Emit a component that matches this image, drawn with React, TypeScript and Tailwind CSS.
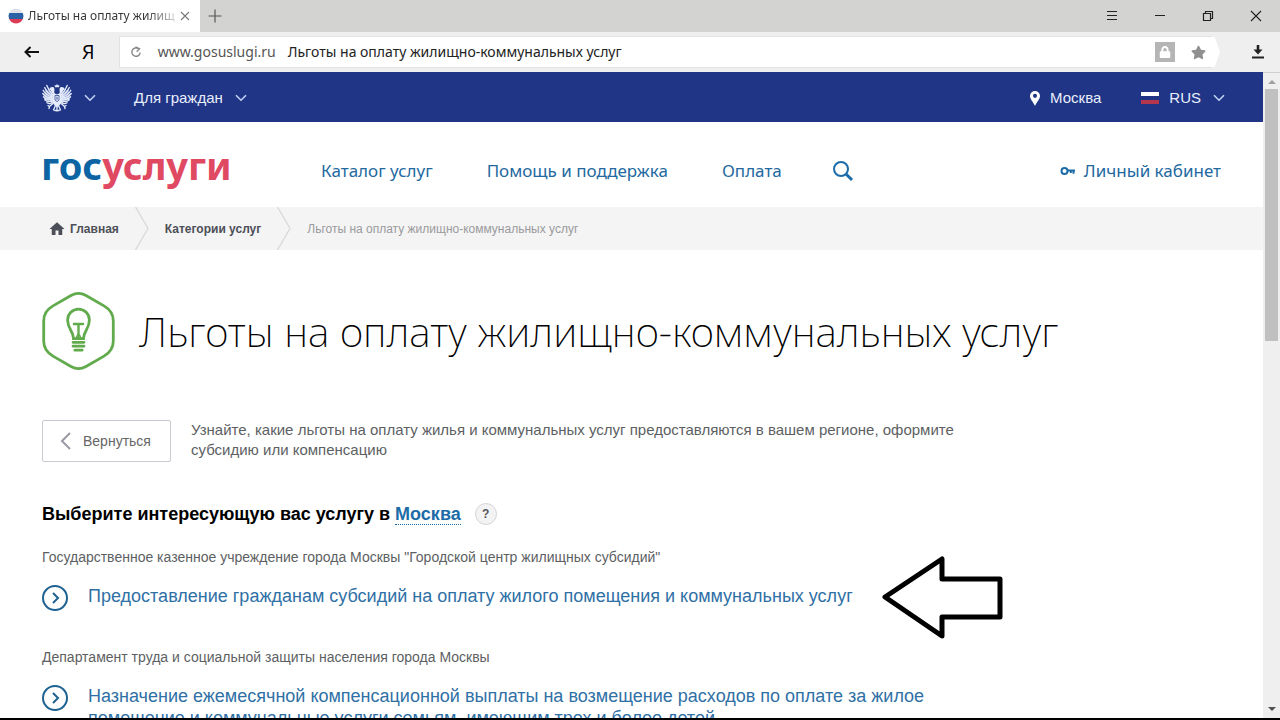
import React from 'react';
import { FaLock, FaStar } from 'react-icons/fa';
import { MdHome } from 'react-icons/md';

const services = [
  {
    org: 'Государственное казенное учреждение города Москвы "Городской центр жилищных субсидий"',
    title: 'Предоставление гражданам субсидий на оплату жилого помещения и коммунальных услуг',
    marked: true,
  },
  {
    org: 'Департамент труда и социальной защиты населения города Москвы',
    title:
      'Назначение ежемесячной компенсационной выплаты на возмещение расходов по оплате за жилое помещение и коммунальные услуги семьям, имеющим трех и более детей',
    marked: false,
  },
];

const Chevron = () => (
  <svg width="12" height="8" viewBox="0 0 12 8" fill="none" stroke="#c3d3f5" strokeWidth="1.6">
    <path d="M1 1.2l5 5 5-5" />
  </svg>
);

const Eagle = () => (
  <svg width="30" height="28" viewBox="0 0 30 28" fill="#e4ebfb">
    <path d="M15 0l1 1.4 1.4-.3-.4 2.2h-4l-.4-2.2 1.4.3z" />
    <path d="M11.500 3.200c-2-.8-3.600.3-3.900 1.500l-1.200.8 1.700.3c.6 1.200 1.400 1.700 1.700 3.100l2.400 1 .2-3.400c.2-1.300.1-2.600-.9-3.300z" />
    <path d="M18.500 3.200c2-.8 3.600.3 3.900 1.500l1.200.8-1.700.3c-.6 1.200-1.400 1.700-1.700 3.100l-2.400 1-.2-3.400c-.2-1.300-.1-2.600.9-3.300z" />
    <path d="M10.500 9.500L12 9l3 1.500L18 9l1.500.500.500 7-2 4.200-3 2.800-3-2.800-2-4.200z" />
    <path opacity=".55" d="M10.500 10L4 5 2.500 9l1 6.500L8 18l3.500.5zM19.500 10L26 5l1.500 4-1 6.500L22 18l-3.500.5z" />
    <g fill="none" stroke="#e4ebfb" strokeWidth="1.350" strokeLinecap="round">
      <path d="M10.500 10.500C8 8 6.300 5.500 4.800 1.500M10 11.700C6.500 10 4.300 7.300 2.700 3.600M10 13C6 12 3 9.800 1.200 6.300M10 14.300C6 14 2.800 12.300.8 9.500M10 15.600C6.500 16 3.300 14.900 1.500 12.700M10 16.900C7.500 18 4.500 17.500 2.800 15.800M10.500 18C9 19.700 6.700 19.900 5 18.700" />
      <path d="M19.500 10.500C22 8 23.700 5.500 25.200 1.500M20 11.700C23.500 10 25.700 7.300 27.300 3.600M20 13C24 12 27 9.800 28.800 6.300M20 14.300C24 14 27.200 12.300 29.200 9.500M20 15.600C23.500 16 26.700 14.900 28.500 12.700M20 16.900C22.500 18 25.500 17.500 27.200 15.800M19.500 18C21 19.700 23.300 19.900 25 18.700" />
      <path d="M11.500 19L7.500 22.500M6 21.500l1.500 1L7 24.500M18.500 19l4 3.500M24 21.500l-1.500 1 .5 2" />
      <path d="M15 21v6M13.500 21.500L11.500 26M16.500 21.500l2 4.500M12.800 26.500h4.400" />
    </g>
    <path d="M13 11.500h4v4.500l-2 1.600-2-1.600z" fill="none" stroke="#203586" strokeWidth=".7" />
    <path d="M15 12.500v3.500M14 14h2" stroke="#203586" strokeWidth=".5" />
  </svg>
);

const BulbBadge = () => (
  <svg className="shrink-0" width="73" height="80" viewBox="0 0 73 80" fill="none" stroke="#62ab4d">
    <path
      d="M29 4.500Q36.500 .2 44 4.500L62 14.900Q71.300 20.300 71.300 30V50Q71.300 59.700 62 65.100L44 75.500Q36.500 79.800 29 75.500L11 65.100Q1.700 59.700 1.700 50V30Q1.700 20.300 11 14.900Z"
      strokeWidth="2.800"
    />
    <path d="M31.500 47.600c0-7.500-5.900-9.600-5.900-18.600a10.900 10.900 0 0 1 21.800 0c0 9-5.900 11.100-5.900 18.600z" strokeWidth="2.800" />
    <path d="M36.500 47V33M32 33h9" strokeWidth="2.400" strokeLinecap="round" />
    <path d="M34 47.500l1.500-3.500h2l1.500 3.500" strokeWidth="1.500" />
    <path d="M31 51.300h11M31 55.200h11M32.800 59.200h7.400" strokeWidth="2.700" strokeLinecap="round" />
  </svg>
);

const BigArrow = () => (
  <svg width="122" height="84" viewBox="0 0 122 84" fill="#fff" stroke="#000" strokeWidth="5" strokeLinejoin="round">
    <path d="M4 42L61 4v20h58v38H61v19z" />
  </svg>
);

const CrumbArrow = () => (
  <svg width="14" height="43" viewBox="0 0 14 43" fill="none" stroke="#d9d9dc" strokeWidth="1.300">
    <path d="M.5 0l12.500 21.500L.5 43" />
  </svg>
);

const BrowserBar = () => (
  <header className="font-['Noto_Sans',sans-serif]">
    <div className="flex h-8 items-stretch bg-[#d3d3d2]">
      <div className="flex w-50 items-center bg-white px-2">
        <svg className="shrink-0" width="16" height="16" viewBox="0 0 16 16">
          <clipPath id="ball">
            <circle cx="8" cy="8" r="7.500" />
          </clipPath>
          <g clipPath="url(#ball)">
            <path fill="#dfe3e8" d="M0 0h16v6H0z" />
            <path fill="#2b62a5" d="M0 5h16v6H0z" />
            <path fill="#dc3c55" d="M0 11h16v5H0z" />
          </g>
        </svg>
        <span className="ml-1 w-[148px] shrink-0 whitespace-nowrap bg-linear-to-r from-[#333] from-80% to-[#ddd] bg-clip-text text-xs text-transparent">
          Льготы на оплату жилищ
        </span>
        <button aria-label="Закрыть вкладку" className="ml-1">
          <svg width="10" height="10" viewBox="0 0 10 10" stroke="#777" strokeWidth="1.100">
            <path d="M1 1l8 8M9 1L1 9" />
          </svg>
        </button>
      </div>
      <button aria-label="Новая вкладка" className="ml-2 self-center">
        <svg width="14" height="14" viewBox="0 0 14 14" stroke="#555" strokeWidth="1.200">
          <path d="M7 .5v13M.5 7h13" />
        </svg>
      </button>
      <div className="ml-auto flex items-center gap-9 pr-[18px]">
        <button aria-label="Меню">
          <svg width="12" height="12" viewBox="0 0 12 12" stroke="#222">
            <path d="M1 1.500h10M1 5.500h10M1 9.500h10" />
          </svg>
        </button>
        <button aria-label="Свернуть">
          <svg width="12" height="12" viewBox="0 0 12 12" stroke="#222">
            <path d="M1 5.500h10" />
          </svg>
        </button>
        <button aria-label="Развернуть">
          <svg width="12" height="12" viewBox="0 0 12 12" fill="none" stroke="#222" strokeWidth="1.200">
            <path d="M1.500 3.500h7v7h-7zM3.500 3.500v-2h7v7h-2" />
          </svg>
        </button>
        <button aria-label="Закрыть">
          <svg width="12" height="12" viewBox="0 0 12 12" stroke="#222" strokeWidth="1.100">
            <path d="M1 1l10 10M11 1L1 11" />
          </svg>
        </button>
      </div>
    </div>

    <div className="flex h-10 items-center bg-[#efeff0] pl-6 pr-[14px]">
      <button aria-label="Назад">
        <svg width="15" height="12" viewBox="0 0 15 12" fill="none" stroke="#111" strokeWidth="2">
          <path d="M6.500 1L1.500 6l5 5M1.500 6H15" />
        </svg>
      </button>
      <button className="ml-[43px] font-['Open_Sans',sans-serif] text-xl leading-8 text-black">Я</button>
      <div className="ml-6 flex flex-1 items-center">
        <div className="flex h-8 flex-1 items-center border border-r-0 border-[#e2e2e4] bg-white pl-2.5">
          <svg width="12" height="12" viewBox="0 0 12 12" fill="none" stroke="#888" strokeWidth="1.400">
            <path d="M8.500 2.700A4.200 4.200 0 1 0 10.200 6.500" />
            <path d="M5.500 1l4 1.800-2.800 3" />
          </svg>
          <span className="ml-4 text-sm text-[#555]">www.gosuslugi.ru</span>
          <span className="ml-3 text-sm text-[#222]">Льготы на оплату жилищно-коммунальных услуг</span>
          <span className="ml-auto flex h-5 w-5 items-center justify-center bg-[#b5b5b5] text-white">
            <FaLock size={12} />
          </span>
          <FaStar className="ml-4 mr-1.5 text-[#8f8f8f]" size={15} />
        </div>
        <svg width="8" height="32" viewBox="0 0 8 32" fill="#fff">
          <path d="M0 0l3 2 5 14-5 14-3 2z" />
        </svg>
      </div>
      <button aria-label="Загрузки" className="ml-[30px]">
        <svg width="16" height="16" viewBox="0 0 16 16" fill="#222">
          <path d="M6.700 1h2.600v4.500h3.200L8 10.500l-4.500-5h3.200zM2 12.500h12v2H2z" />
        </svg>
      </button>
    </div>
  </header>
);

const TopLine = () => (
  <div className="flex h-[50px] items-center bg-[#203586] pl-[42px] pr-[38px] pt-0.5 text-[15px] text-[#e8eefc]">
    <button aria-label="Государственные порталы" className="flex items-center gap-3">
      <Eagle />
      <Chevron />
    </button>
    <button className="ml-[38px] flex items-center gap-3">
      Для граждан
      <Chevron />
    </button>
    <button className="ml-auto flex items-center gap-2.5">
      <svg width="10" height="15" viewBox="0 0 10 15" fill="#fff" fillRule="evenodd">
        <path d="M5 0a5 5 0 0 1 5 5c0 3-3.200 6-5 10C3.200 11 0 8 0 5a5 5 0 0 1 5-5zm0 2.800a2 2 0 1 0 0 4.100 2 2 0 0 0 0-4.100z" />
      </svg>
      Москва
    </button>
    <button className="ml-10 flex items-center">
      <svg width="18" height="12" viewBox="0 0 18 12">
        <path fill="#fff" d="M0 0h18v4H0z" />
        <path fill="#b4364d" d="M0 8h18v4H0z" />
      </svg>
      <span className="ml-2.5 mr-3">RUS</span>
      <Chevron />
    </button>
  </div>
);

const SiteNav = () => (
  <nav className="flex h-[85px] items-center pl-[41px] pr-[42px] pt-3 font-['Noto_Sans',sans-serif] text-[17px] text-[#2369a0]">
    <a href="#" className="w-[280px] pb-3 text-[38px] font-bold leading-10 text-[#df4962]">
      <span className="text-[#0c64a3]">гос</span>услуги
    </a>
    <a href="#">Каталог услуг</a>
    <a href="#" className="ml-[54px]">Помощь и поддержка</a>
    <a href="#" className="ml-[54px]">Оплата</a>
    <button aria-label="Поиск" className="ml-[50px]">
      <svg width="22" height="22" viewBox="0 0 22 22" fill="none" stroke="#1d6ca8">
        <circle cx="9" cy="9" r="7" strokeWidth="2" />
        <path d="M14 14l6 6" strokeWidth="3" />
      </svg>
    </button>
    <a href="#" className="ml-auto flex items-center gap-2">
      <svg width="16" height="10" viewBox="0 0 16 10" fill="none" stroke="#1d6ca8" strokeWidth="2">
        <circle cx="4.500" cy="5" r="3" />
        <path d="M7.500 4.500H15M13.500 4.500v3.300M10.800 4.500v2.500" />
      </svg>
      Личный кабинет
    </a>
  </nav>
);

const Breadcrumbs = () => (
  <div className="flex h-[43px] items-center bg-[#f4f4f5] pl-12 text-xs font-bold text-[#4c4f57]">
    <a href="#" className="flex items-center gap-1">
      <MdHome size={18} />
      Главная
    </a>
    <span className="mx-4"><CrumbArrow /></span>
    <a href="#">Категории услуг</a>
    <span className="mx-4"><CrumbArrow /></span>
    <span className="font-normal text-[#9a9a9c]">Льготы на оплату жилищно-коммунальных услуг</span>
  </div>
);

const Scrollbar = () => (
  <div className="flex w-[17px] shrink-0 flex-col items-center border-t border-[#cfcfd2] bg-[#f0eff0]">
    <svg width="8" height="16" viewBox="0 0 8 16" fill="#a0a0a0">
      <path d="M0 11l4-4 4 4z" />
    </svg>
    <div className="h-[39%] w-[13px] bg-[#c1c0c1]" />
    <svg className="mt-auto" width="8" height="16" viewBox="0 0 8 16" fill="#505050">
      <path d="M0 5l4 4 4-4z" />
    </svg>
  </div>
);

const App = () => {
  return (
    <div className="flex h-screen flex-col overflow-hidden bg-white font-['Liberation_Sans',sans-serif]">
      <BrowserBar />
      <div className="flex min-h-0 flex-1">
        <div className="min-w-0 flex-1 overflow-hidden">
          <TopLine />
          <SiteNav />
          <Breadcrumbs />

          <main className="pl-[42px] pr-10 pt-[41px]">
            <div className="flex items-center gap-6">
              <BulbBadge />
              <h1 className="whitespace-nowrap font-['Noto_Sans',sans-serif] text-[41px] font-extralight leading-none text-black">
                Льготы на оплату жилищно-коммунальных услуг
              </h1>
            </div>

            <div className="mt-[49px] flex items-start">
              <button className="flex h-[42px] w-[129px] shrink-0 items-center gap-3 rounded-xs border border-[#c9c9d2] pl-[17px] text-sm text-[#666]">
                <svg width="11" height="18" viewBox="0 0 11 18" fill="none" stroke="#9a9aa3" strokeWidth="2">
                  <path d="M10 1L2 9l8 8" />
                </svg>
                Вернуться
              </button>
              <p className="ml-5 max-w-[780px] text-[15px] leading-5 text-[#5d5f63]">
                Узнайте, какие льготы на оплату жилья и коммунальных услуг предоставляются в вашем регионе, оформите
                субсидию или компенсацию
              </p>
            </div>

            <div className="mt-10 flex items-center gap-3.5">
              <h2 className="text-lg font-bold leading-6 text-black">
                Выберите интересующую вас услугу в{' '}
                <a href="#" className="border-b border-dotted border-[#1d6ca8] text-[#1d6ca8]">Москва</a>
              </h2>
              <button className="h-[22px] w-[22px] rounded-full border border-[#d5d5d8] bg-[#f3f3f4] text-xs font-bold text-[#55555a]">
                ?
              </button>
            </div>

            <div className="mt-[21px] flex flex-col gap-9">
              {services.map((service) => (
                <section key={service.title}>
                  <p className="text-sm leading-5 text-[#5d5f63]">{service.org}</p>
                  <div className="relative mt-[18px] flex items-start">
                    <svg className="shrink-0" width="26" height="26" viewBox="0 0 26 26" fill="none" stroke="#1e6291" strokeWidth="2">
                      <circle cx="13" cy="13" r="12" />
                      <path d="M11 8l5 5-5 5" />
                    </svg>
                    <a href="#" className="ml-5 max-w-[860px] text-lg leading-[22px] text-[#2f70a5]">
                      {service.title}
                    </a>
                    {service.marked && (
                      <div className="absolute -top-[30px] left-[839px]">
                        <BigArrow />
                      </div>
                    )}
                  </div>
                </section>
              ))}
            </div>
          </main>
        </div>
        <Scrollbar />
      </div>
      <div className="h-0.5 shrink-0 bg-black" />
    </div>
  );
};

export default App;
